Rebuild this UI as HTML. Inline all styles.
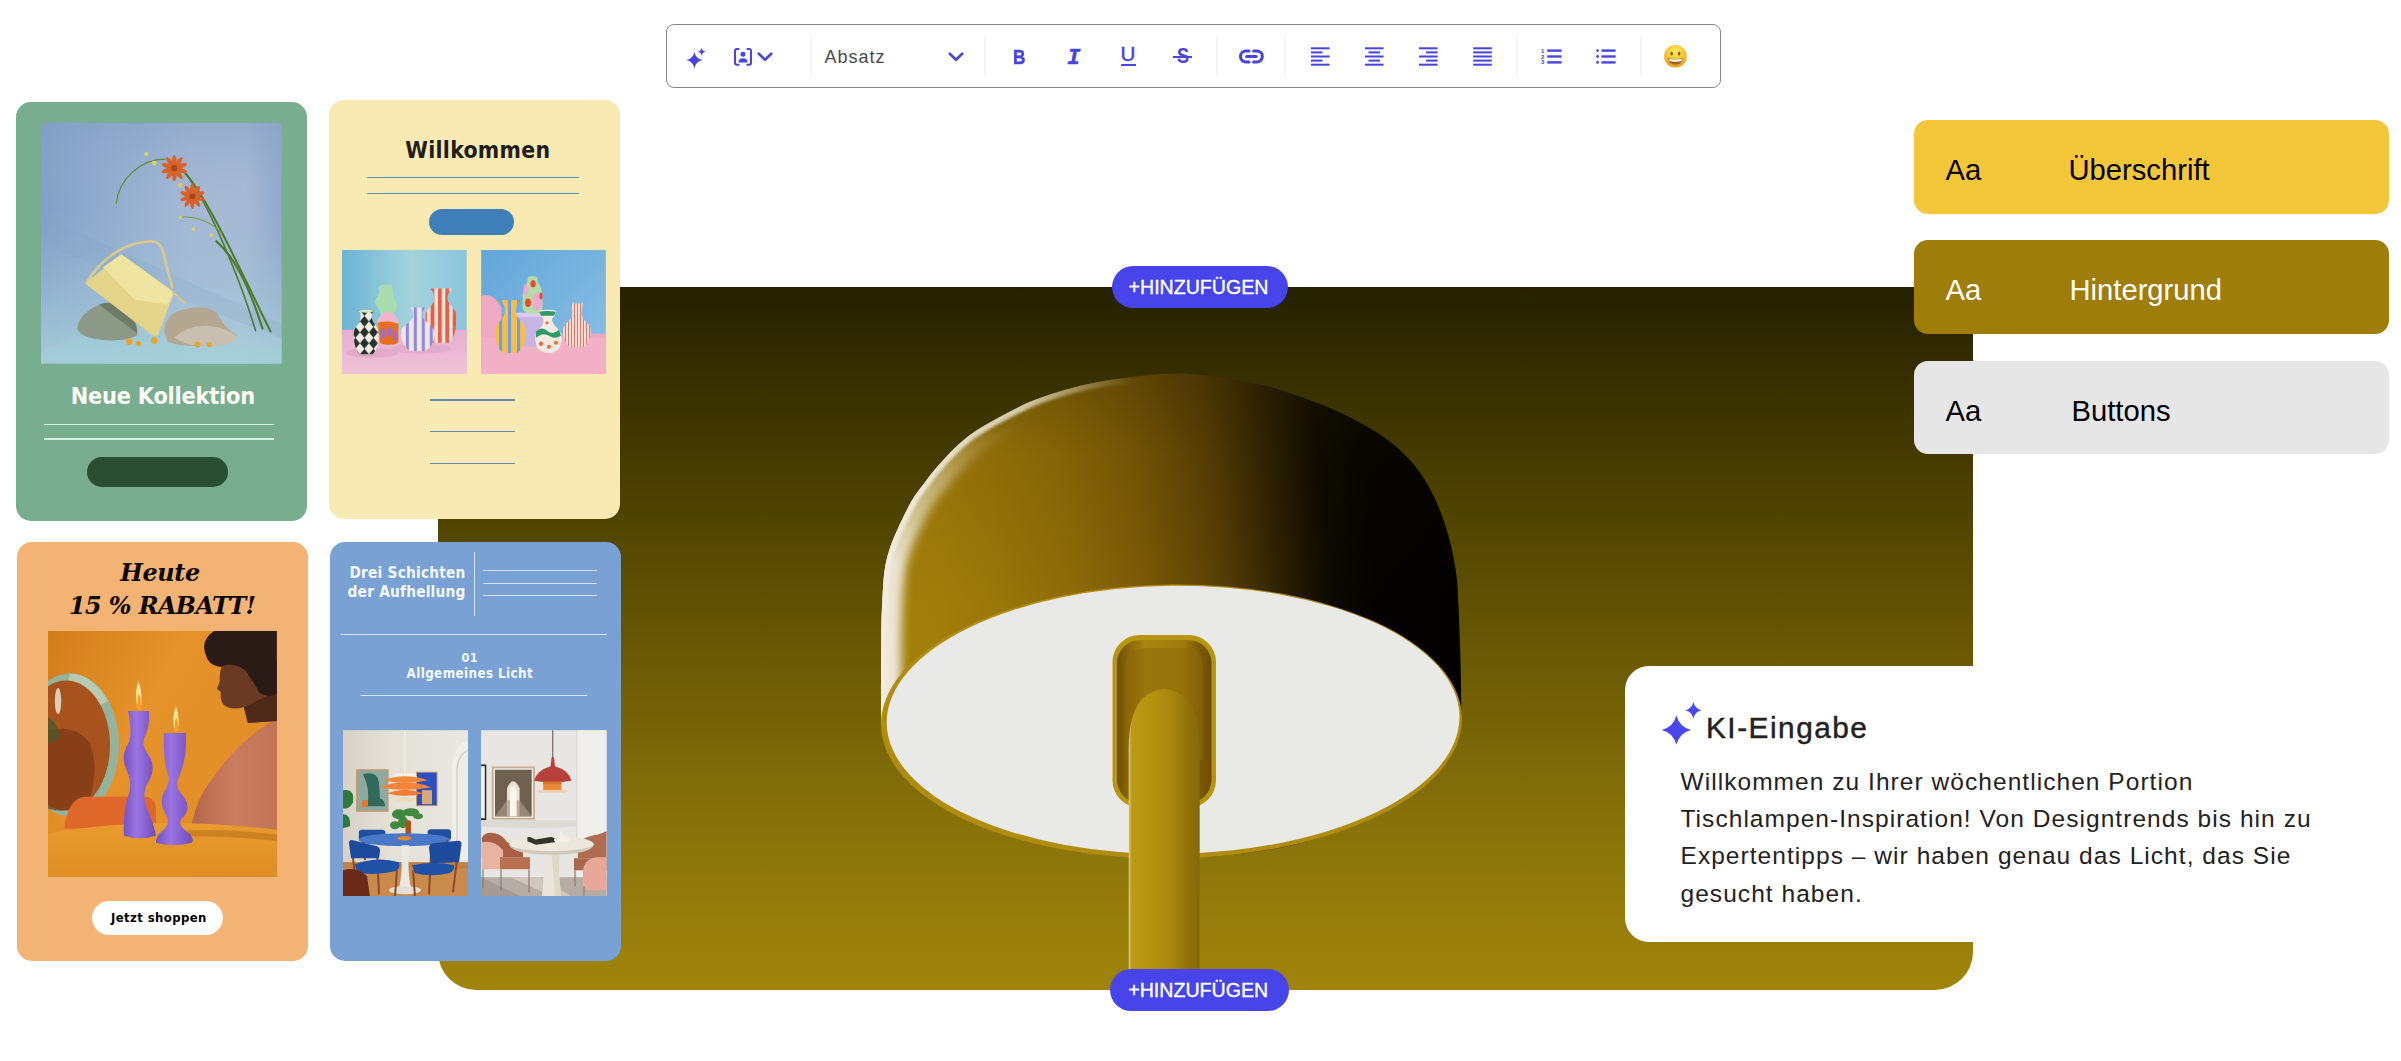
<!DOCTYPE html>
<html lang="de">
<head>
<meta charset="utf-8">
<title>E-Mail Editor</title>
<style>
*{box-sizing:border-box;margin:0;padding:0}
html,body{width:2401px;height:1061px;background:#fff;overflow:hidden}
body{position:relative;font-family:"Liberation Sans",sans-serif}
.abs{position:absolute}
/* main panel */
#panel{left:437.5px;top:287px;width:1535.5px;height:703px;border-radius:0 0 38px 38px;overflow:hidden;
 background:linear-gradient(180deg,#262100 0%,#463c00 25%,#675604 50%,#86710a 75%,#a1840a 100%)}
#panel svg{position:absolute;left:0;top:0}
/* toolbar */
#toolbar{left:666px;top:24px;width:1054.5px;height:63.5px;border:1.3px solid #858585;border-radius:8px;background:#fff}
.tdiv{position:absolute;top:36px;width:1.3px;height:40px;background:#ededf0}
#absatz{left:824.5px;top:46.3px;font-size:18px;line-height:22px;color:#4a4a4a;letter-spacing:1px}
.tb{color:#4744e0;line-height:24px;font-family:"Liberation Sans",sans-serif}
/* pills */
.pill{background:#4745ea;border-radius:22px;color:#fff;font-size:19.6px;line-height:43px;text-align:center;letter-spacing:0;padding-right:3px;-webkit-text-stroke:.35px #fff}
/* cards */
.card{border-radius:15px;overflow:hidden}
#c1{left:16px;top:101.7px;width:290.6px;height:419.2px;background:#78ad8f}
#c2{left:329px;top:99.8px;width:290.8px;height:419.2px;background:#f8eab2}
#c3{left:17.3px;top:541.7px;width:290.8px;height:419.2px;background:#f2b374}
#c4{left:330.4px;top:541.5px;width:290.6px;height:419.5px;background:#79a1d4}
.dv{font-family:"DejaVu Sans","Liberation Sans",sans-serif;font-weight:bold}
.dvc{font-family:"DejaVu Sans Condensed","DejaVu Sans","Liberation Sans",sans-serif;font-weight:bold;font-stretch:condensed}
.ln{position:absolute;height:1.3px}
/* swatches */
.sw{left:1913.5px;width:475px;height:93.5px;border-radius:14px;font-size:29.2px;line-height:34px}
.sw span{position:absolute;top:33px}
/* KI card */
#ki{left:1625px;top:666px;width:760px;height:275.5px;background:#fff;border-radius:24px}
#kit{left:1706px;top:706.1px;font-size:29.8px;line-height:44px;color:#222;letter-spacing:1.5px;-webkit-text-stroke:.45px #222}
#kib{left:1680.5px;top:763px;font-size:24.5px;line-height:37.2px;color:#222;white-space:nowrap;letter-spacing:1.05px}
</style>
</head>
<body>

<!-- MAIN PANEL -->
<div id="panel" class="abs">
<!--LAMP-->
<svg width="1535.5" height="703" viewBox="437.5 287 1535.5 703">
<defs>
<linearGradient id="dg" gradientUnits="userSpaceOnUse" x1="879" y1="600" x2="1461" y2="545">
<stop offset="0" stop-color="#a27f0b"/><stop offset=".1" stop-color="#a17d0a"/><stop offset=".21" stop-color="#997609"/><stop offset=".34" stop-color="#8c6a08"/><stop offset=".46" stop-color="#795906"/><stop offset=".58" stop-color="#594005"/><stop offset=".675" stop-color="#322403"/><stop offset=".77" stop-color="#0c0900"/><stop offset=".85" stop-color="#040300"/><stop offset="1" stop-color="#020100"/>
</linearGradient>
<linearGradient id="eg" gradientUnits="userSpaceOnUse" x1="0" y1="700" x2="0" y2="425">
<stop offset="0" stop-color="#f1ece1" stop-opacity=".97"/><stop offset=".5" stop-color="#f1ece1" stop-opacity=".92"/><stop offset=".8" stop-color="#efe8d8" stop-opacity=".45"/><stop offset="1" stop-color="#efe8d8" stop-opacity="0"/>
</linearGradient>
<linearGradient id="eg2" gradientUnits="userSpaceOnUse" x1="900" y1="520" x2="1130" y2="376">
<stop offset="0" stop-color="#f1ece1" stop-opacity=".95"/><stop offset=".6" stop-color="#f1ece1" stop-opacity=".75"/><stop offset="1" stop-color="#efe8d8" stop-opacity="0"/>
</linearGradient>
<filter id="bl2" x="-10%" y="-10%" width="120%" height="120%"><feGaussianBlur stdDeviation="1.5"/></filter>
<clipPath id="dc"><path d="M880.5 722.0 C880.5 711.7 880.4 679.5 880.6 660.0 C880.8 640.5 880.5 622.3 881.6 605.0 C882.7 587.7 882.6 572.3 887.0 556.0 C891.4 539.7 901.6 519.2 907.8 507.0 C914.0 494.8 918.1 490.7 924.2 482.5 C930.3 474.3 936.6 466.2 944.5 458.0 C952.4 449.8 959.9 441.7 971.5 433.5 C983.1 425.3 1002.5 415.1 1014.4 409.0 C1026.2 402.9 1030.8 400.9 1042.6 396.8 C1054.4 392.7 1070.9 387.8 1085.4 384.5 C1099.9 381.2 1113.7 379.0 1129.5 377.2 C1145.3 375.4 1162.7 373.1 1180.0 373.5 C1197.3 373.9 1217.2 377.0 1233.5 379.6 C1249.8 382.2 1261.3 384.5 1277.6 389.4 C1293.9 394.3 1314.8 401.6 1331.5 409.0 C1348.2 416.4 1365.3 425.3 1378.0 433.5 C1390.7 441.7 1399.5 449.8 1407.5 458.0 C1415.5 466.2 1420.8 474.3 1425.9 482.5 C1431.0 490.7 1434.6 498.8 1438.1 507.0 C1441.6 515.2 1444.2 523.3 1446.7 531.5 C1449.2 539.7 1451.2 547.8 1452.8 556.0 C1454.4 564.2 1455.7 572.3 1456.5 580.5 C1457.3 588.7 1457.3 591.8 1457.9 605.0 C1458.5 618.2 1459.5 641.5 1460.0 660.0 C1460.5 678.5 1460.8 706.7 1461.0 716.0 C1440 800 1330 858 1171 858 C1010 858 900 800 880.5 722 Z"/></clipPath>
<filter id="bl" x="-10%" y="-10%" width="120%" height="120%"><feGaussianBlur stdDeviation="5"/></filter>
<linearGradient id="dt" gradientUnits="userSpaceOnUse" x1="0" y1="374" x2="0" y2="600">
<stop offset="0" stop-color="#2a2000" stop-opacity=".3"/><stop offset=".35" stop-color="#2a2000" stop-opacity=".1"/><stop offset="1" stop-color="#2a2000" stop-opacity="0"/>
</linearGradient>
<linearGradient id="sg" gradientUnits="userSpaceOnUse" x1="1127.5" y1="0" x2="1199.5" y2="0">
<stop offset="0" stop-color="#e6d9a2"/><stop offset=".05" stop-color="#bd9a14"/><stop offset=".3" stop-color="#b6930f"/><stop offset=".6" stop-color="#a8860e"/><stop offset=".85" stop-color="#8f700b"/><stop offset="1" stop-color="#86680a"/>
</linearGradient>
<linearGradient id="sl" gradientUnits="userSpaceOnUse" x1="1116" y1="0" x2="1211" y2="0">
<stop offset="0" stop-color="#6e4c06"/><stop offset=".12" stop-color="#8a6608"/><stop offset=".3" stop-color="#a9850f"/><stop offset=".7" stop-color="#a07c0e"/><stop offset=".88" stop-color="#7a5807"/><stop offset="1" stop-color="#6e4c06"/>
</linearGradient>
</defs>
<!-- dome -->
<path id="dome" d="M880.5 722.0 C880.5 711.7 880.4 679.5 880.6 660.0 C880.8 640.5 880.5 622.3 881.6 605.0 C882.7 587.7 882.6 572.3 887.0 556.0 C891.4 539.7 901.6 519.2 907.8 507.0 C914.0 494.8 918.1 490.7 924.2 482.5 C930.3 474.3 936.6 466.2 944.5 458.0 C952.4 449.8 959.9 441.7 971.5 433.5 C983.1 425.3 1002.5 415.1 1014.4 409.0 C1026.2 402.9 1030.8 400.9 1042.6 396.8 C1054.4 392.7 1070.9 387.8 1085.4 384.5 C1099.9 381.2 1113.7 379.0 1129.5 377.2 C1145.3 375.4 1162.7 373.1 1180.0 373.5 C1197.3 373.9 1217.2 377.0 1233.5 379.6 C1249.8 382.2 1261.3 384.5 1277.6 389.4 C1293.9 394.3 1314.8 401.6 1331.5 409.0 C1348.2 416.4 1365.3 425.3 1378.0 433.5 C1390.7 441.7 1399.5 449.8 1407.5 458.0 C1415.5 466.2 1420.8 474.3 1425.9 482.5 C1431.0 490.7 1434.6 498.8 1438.1 507.0 C1441.6 515.2 1444.2 523.3 1446.7 531.5 C1449.2 539.7 1451.2 547.8 1452.8 556.0 C1454.4 564.2 1455.7 572.3 1456.5 580.5 C1457.3 588.7 1457.3 591.8 1457.9 605.0 C1458.5 618.2 1459.5 641.5 1460.0 660.0 C1460.5 678.5 1460.8 706.7 1461.0 716.0 C1440 800 1330 858 1171 858 C1010 858 900 800 880.5 722 Z" fill="url(#dg)"/>
<path d="M880.5 722.0 C880.5 711.7 880.4 679.5 880.6 660.0 C880.8 640.5 880.5 622.3 881.6 605.0 C882.7 587.7 882.6 572.3 887.0 556.0 C891.4 539.7 901.6 519.2 907.8 507.0 C914.0 494.8 918.1 490.7 924.2 482.5 C930.3 474.3 936.6 466.2 944.5 458.0 C952.4 449.8 959.9 441.7 971.5 433.5 C983.1 425.3 1002.5 415.1 1014.4 409.0 C1026.2 402.9 1030.8 400.9 1042.6 396.8 C1054.4 392.7 1070.9 387.8 1085.4 384.5 C1099.9 381.2 1113.7 379.0 1129.5 377.2 C1145.3 375.4 1162.7 373.1 1180.0 373.5 C1197.3 373.9 1217.2 377.0 1233.5 379.6 C1249.8 382.2 1261.3 384.5 1277.6 389.4 C1293.9 394.3 1314.8 401.6 1331.5 409.0 C1348.2 416.4 1365.3 425.3 1378.0 433.5 C1390.7 441.7 1399.5 449.8 1407.5 458.0 C1415.5 466.2 1420.8 474.3 1425.9 482.5 C1431.0 490.7 1434.6 498.8 1438.1 507.0 C1441.6 515.2 1444.2 523.3 1446.7 531.5 C1449.2 539.7 1451.2 547.8 1452.8 556.0 C1454.4 564.2 1455.7 572.3 1456.5 580.5 C1457.3 588.7 1457.3 591.8 1457.9 605.0 C1458.5 618.2 1459.5 641.5 1460.0 660.0 C1460.5 678.5 1460.8 706.7 1461.0 716.0 C1440 800 1330 858 1171 858 C1010 858 900 800 880.5 722 Z" fill="url(#dt)"/>
<g clip-path="url(#dc)"><path d="M880.5 780 L880.5 722.0 C880.5 711.7 880.4 679.5 880.6 660.0 C880.8 640.5 880.5 622.3 881.6 605.0 C882.7 587.7 882.6 572.3 887.0 556.0 C891.4 539.7 901.6 519.2 907.8 507.0 C914.0 494.8 918.1 490.7 924.2 482.5 C930.3 474.3 936.6 466.2 944.5 458.0 C952.4 449.8 959.9 441.7 971.5 433.5 C983.1 425.3 1002.5 415.1 1014.4 409.0 C1026.2 402.9 1030.8 400.9 1042.6 396.8 C1054.4 392.7 1070.9 387.8 1085.4 384.5 C1099.9 381.2 1113.7 379.0 1129.5 377.2 C1145.3 375.4 1162.7 373.1 1180.0 373.5" fill="none" stroke="url(#eg)" stroke-width="40" filter="url(#bl)"/><path d="M880.5 780 L880.5 722.0 C880.5 711.7 880.4 679.5 880.6 660.0 C880.8 640.5 880.5 622.3 881.6 605.0 C882.7 587.7 882.6 572.3 887.0 556.0 C891.4 539.7 901.6 519.2 907.8 507.0 C914.0 494.8 918.1 490.7 924.2 482.5 C930.3 474.3 936.6 466.2 944.5 458.0 C952.4 449.8 959.9 441.7 971.5 433.5 C983.1 425.3 1002.5 415.1 1014.4 409.0 C1026.2 402.9 1030.8 400.9 1042.6 396.8 C1054.4 392.7 1070.9 387.8 1085.4 384.5 C1099.9 381.2 1113.7 379.0 1129.5 377.2 C1145.3 375.4 1162.7 373.1 1180.0 373.5" fill="none" stroke="url(#eg2)" stroke-width="11" filter="url(#bl2)"/></g>
<!-- rim + white -->
<ellipse cx="1171" cy="721.5" rx="290.5" ry="137" fill="#b08c0f" transform="rotate(-.7 1171 721)"/>
<ellipse cx="1172.6" cy="719.8" rx="286.4" ry="134" fill="#e9e9e7" transform="rotate(-.7 1171 721)"/>
<!-- slot -->
<rect x="1112" y="635" width="103.5" height="172.5" rx="27" fill="#b8950f"/>
<rect x="1116.5" y="640" width="94.5" height="163" rx="23" fill="url(#sl)"/>
<path d="M1124 760 V668 Q1124 648 1146 648 H1182 Q1203 648 1203 668 V760Z" fill="#8d6a0a" opacity=".55"/>
<!-- stem -->
<path d="M1128.2 1000 V748 Q1128.2 692 1163.5 689 Q1199.2 692 1199.2 748 V1000 Z" fill="url(#sg)"/>
</svg>
<!--/LAMP-->
</div>

<!-- TOOLBAR -->
<div id="toolbar" class="abs"></div>
<!--TOOLBARICONS-->
<svg class="abs" style="left:666px;top:24px" width="1056" height="64" viewBox="666 24 1056 64" fill="#4744e0">
<rect x="810.3" y="36" width="1.4" height="40" fill="#f0f0f4"/>
<rect x="984.3" y="36" width="1.4" height="40" fill="#f0f0f4"/>
<rect x="1216.3" y="36" width="1.4" height="40" fill="#f0f0f4"/>
<rect x="1284.3" y="36" width="1.4" height="40" fill="#f0f0f4"/>
<rect x="1516.3" y="36" width="1.4" height="40" fill="#f0f0f4"/>
<rect x="1640.3" y="36" width="1.4" height="40" fill="#f0f0f4"/>
<path d="M694.4 51.7 Q695.66 58.84 702.8 60.1 Q695.66 61.36 694.4 68.5 Q693.14 61.36 686.0 60.1 Q693.14 58.84 694.4 51.7Z"/><path d="M701.7 47.8 Q702.26 51.24 705.7 51.8 Q702.26 52.36 701.7 55.8 Q701.14 52.36 697.7 51.8 Q701.14 51.24 701.7 47.8Z"/>
<g fill="none" stroke="#4744e0" stroke-width="2" stroke-linejoin="round" stroke-linecap="round"><path d="M738.6 49 H737 Q735 49 735 51 V62.7 Q735 64.7 737 64.7 H738.6"/><path d="M747.4 49 H749 Q751 49 751 51 V62.7 Q751 64.7 749 64.7 H747.4"/></g>
<circle cx="743" cy="54.2" r="2.5"/><path d="M738.4 62.6 Q738.4 58.2 743 58.2 Q747.6 58.2 747.6 62.6 Z"/>
<path d="M758.8 53.7 L765 59.7 L771.2 53.7" fill="none" stroke="#4744e0" stroke-width="2.6" stroke-linecap="round" stroke-linejoin="round"/>
<path d="M949.8 53.7 L956 59.7 L962.2 53.7" fill="none" stroke="#4744e0" stroke-width="2.6" stroke-linecap="round" stroke-linejoin="round"/>
<g fill="none" stroke="#4744e0" stroke-width="3" stroke-linecap="round"><path d="M1249 50.9 H1246 A5.5 5.5 0 0 0 1246 62 H1249"/><path d="M1253.6 50.9 H1256.8 A5.5 5.5 0 0 1 1256.8 62 H1253.6"/><path d="M1246.6 56.45 H1256.2"/></g>
<rect x="1311.0" y="47.3" width="18.6" height="2"/><rect x="1311.0" y="51.4" width="11.5" height="2"/><rect x="1311.0" y="55.5" width="18.6" height="2"/><rect x="1311.0" y="59.6" width="11.5" height="2"/><rect x="1311.0" y="63.7" width="18.6" height="2"/><rect x="1365.0" y="47.3" width="18.6" height="2"/><rect x="1368.5" y="51.4" width="11.5" height="2"/><rect x="1365.0" y="55.5" width="18.6" height="2"/><rect x="1368.5" y="59.6" width="11.5" height="2"/><rect x="1365.0" y="63.7" width="18.6" height="2"/><rect x="1419.0" y="47.3" width="18.6" height="2"/><rect x="1426.1" y="51.4" width="11.5" height="2"/><rect x="1419.0" y="55.5" width="18.6" height="2"/><rect x="1426.1" y="59.6" width="11.5" height="2"/><rect x="1419.0" y="63.7" width="18.6" height="2"/><rect x="1473.2" y="47.3" width="18.6" height="2"/><rect x="1473.2" y="51.4" width="18.6" height="2"/><rect x="1473.2" y="55.5" width="18.6" height="2"/><rect x="1473.2" y="59.6" width="18.6" height="2"/><rect x="1473.2" y="63.7" width="18.6" height="2"/>
<rect x="1547.2" y="49.4" width="14.4" height="2.4"/>
<circle cx="1597.6" cy="50.6" r="1.4"/><rect x="1601.4" y="49.4" width="14.2" height="2.4"/>
<rect x="1547.2" y="55.3" width="14.4" height="2.4"/>
<circle cx="1597.6" cy="56.5" r="1.4"/><rect x="1601.4" y="55.3" width="14.2" height="2.4"/>
<rect x="1547.2" y="61.2" width="14.4" height="2.4"/>
<circle cx="1597.6" cy="62.4" r="1.4"/><rect x="1601.4" y="61.2" width="14.2" height="2.4"/>
<text x="1541" y="52.6" font-family="Liberation Sans,sans-serif" font-weight="bold" font-size="6" fill="#4744e0">1</text>
<text x="1541" y="58.5" font-family="Liberation Sans,sans-serif" font-weight="bold" font-size="6" fill="#4744e0">2</text>
<text x="1541" y="64.4" font-family="Liberation Sans,sans-serif" font-weight="bold" font-size="6" fill="#4744e0">3</text>
<defs><radialGradient id="em" cx=".5" cy=".28" r=".75"><stop offset="0" stop-color="#fdea62"/><stop offset=".5" stop-color="#f8c832"/><stop offset="1" stop-color="#e6991e"/></radialGradient></defs>
<circle cx="1675.4" cy="56.3" r="11.3" fill="url(#em)"/>
<ellipse cx="1671.7" cy="53.6" rx="1.25" ry="1.9" fill="#7a5a12"/><ellipse cx="1679.1" cy="53.6" rx="1.25" ry="1.9" fill="#7a5a12"/>
<path d="M1667.9 58 Q1675.4 59.8 1682.9 58 Q1682.2 64.8 1675.4 64.8 Q1668.6 64.8 1667.9 58Z" fill="#a0641a"/>
<path d="M1668.7 58.8 Q1675.4 60.3 1682.1 58.8 Q1681.9 60.4 1681.2 61.3 Q1675.4 62.2 1669.6 61.3 Q1668.9 60.4 1668.7 58.8Z" fill="#fff"/>
</svg>
<div class="abs tb" style="left:1013.2px;top:44.9px;font-weight:bold;font-size:21px;transform:scaleX(.82);transform-origin:0 0;-webkit-text-stroke:.5px #4744e0">B</div>
<div class="abs tb" style="left:1067.3px;top:46.5px;font-family:'Liberation Mono',monospace;font-weight:bold;font-style:italic;font-size:21.8px;-webkit-text-stroke:.6px #4744e0">I</div>
<div class="abs tb" style="left:1120.6px;top:41.6px;font-size:20.6px;-webkit-text-stroke:.5px #4744e0">U</div>
<div class="abs" style="left:1121px;top:64.3px;width:14.6px;height:1.7px;background:#4744e0"></div>
<div class="abs tb" style="left:1176.8px;top:44.4px;font-size:21.4px;font-weight:bold;transform:scaleX(.86);transform-origin:0 0">S</div>
<div class="abs" style="left:1173px;top:55.7px;width:18.8px;height:2.2px;background:#4744e0"></div>
<!--/TOOLBARICONS-->
<div id="absatz" class="abs">Absatz</div>

<!-- ADD BUTTONS -->
<div class="abs pill" style="left:1112px;top:266px;width:176px;height:42px">+HINZUFÜGEN</div>
<div class="abs pill" style="left:1110.2px;top:968.7px;width:179px;height:42px">+HINZUFÜGEN</div>

<!-- CARDS -->
<div id="c1" class="abs card">
<!--C1-->
<svg class="abs" style="left:25px;top:21.4px" width="240.6" height="240.6" viewBox="0 0 240 240">
<defs>
<linearGradient id="b1" x1="0" y1="0" x2="1" y2="0"><stop offset="0" stop-color="#7c9cc4"/><stop offset=".35" stop-color="#93aecf"/><stop offset=".62" stop-color="#a6b9d4"/><stop offset=".85" stop-color="#a9bad5"/><stop offset="1" stop-color="#8ea6c8"/></linearGradient>
<linearGradient id="b1v" x1="0" y1="0" x2="0" y2="1"><stop offset="0" stop-color="#86a0c6" stop-opacity=".55"/><stop offset=".35" stop-color="#9db5d3" stop-opacity=".15"/><stop offset=".7" stop-color="#a3c4d8" stop-opacity=".55"/><stop offset="1" stop-color="#a9cfd9" stop-opacity=".95"/></linearGradient>
</defs>
<rect width="240" height="240" fill="url(#b1)"/>
<rect width="240" height="240" fill="url(#b1v)"/>
<path d="M0 92 L240 200 V215 L0 120Z" fill="#7f9fc2" opacity=".18"/>
<path d="M0 228 Q40 205 120 215 T240 222 V240 H0Z" fill="#9fd0d6" opacity=".35"/>
<!-- stems -->
<g fill="none" stroke="#4f7a2c" stroke-linecap="round">
<path d="M141 47 C165 70 200 150 229 208" stroke-width="2"/>
<path d="M143 49 C168 80 200 160 214 207" stroke-width="1.6"/>
<path d="M175 118 C195 135 210 170 221 205" stroke-width="2.2"/>
<path d="M124 36 C100 36 78 55 75 80" stroke-width="1.1" stroke="#5f8a3a"/>
<path d="M139 94 C155 92 172 100 180 110" stroke-width="1" stroke="#7a9a4a"/>
</g>
<g fill="#e2d05a"><circle cx="105" cy="31" r="2"/><circle cx="113" cy="40" r="2.4"/><circle cx="139" cy="62" r="2.2"/><circle cx="152" cy="106" r="1.8"/><circle cx="170" cy="112" r="1.8"/><circle cx="139" cy="94" r="1.5"/></g>
<g fill="#d9622a"><ellipse cx="133" cy="38.1" rx="2.3" ry="6.3" transform="rotate(0 133 45)"/><ellipse cx="133" cy="38.1" rx="2.3" ry="6.3" transform="rotate(36 133 45)"/><ellipse cx="133" cy="38.1" rx="2.3" ry="6.3" transform="rotate(72 133 45)"/><ellipse cx="133" cy="38.1" rx="2.3" ry="6.3" transform="rotate(108 133 45)"/><ellipse cx="133" cy="38.1" rx="2.3" ry="6.3" transform="rotate(144 133 45)"/><ellipse cx="133" cy="38.1" rx="2.3" ry="6.3" transform="rotate(180 133 45)"/><ellipse cx="133" cy="38.1" rx="2.3" ry="6.3" transform="rotate(216 133 45)"/><ellipse cx="133" cy="38.1" rx="2.3" ry="6.3" transform="rotate(252 133 45)"/><ellipse cx="133" cy="38.1" rx="2.3" ry="6.3" transform="rotate(288 133 45)"/><ellipse cx="133" cy="38.1" rx="2.3" ry="6.3" transform="rotate(324 133 45)"/><ellipse cx="151" cy="66.4" rx="2.2" ry="6.1" transform="rotate(0 151 73)"/><ellipse cx="151" cy="66.4" rx="2.2" ry="6.1" transform="rotate(36 151 73)"/><ellipse cx="151" cy="66.4" rx="2.2" ry="6.1" transform="rotate(72 151 73)"/><ellipse cx="151" cy="66.4" rx="2.2" ry="6.1" transform="rotate(108 151 73)"/><ellipse cx="151" cy="66.4" rx="2.2" ry="6.1" transform="rotate(144 151 73)"/><ellipse cx="151" cy="66.4" rx="2.2" ry="6.1" transform="rotate(180 151 73)"/><ellipse cx="151" cy="66.4" rx="2.2" ry="6.1" transform="rotate(216 151 73)"/><ellipse cx="151" cy="66.4" rx="2.2" ry="6.1" transform="rotate(252 151 73)"/><ellipse cx="151" cy="66.4" rx="2.2" ry="6.1" transform="rotate(288 151 73)"/><ellipse cx="151" cy="66.4" rx="2.2" ry="6.1" transform="rotate(324 151 73)"/><circle cx="133" cy="45" r="5.5"/><circle cx="151" cy="73" r="5.2"/></g>
<g fill="#a8481a"><circle cx="133" cy="45" r="3.2"/><circle cx="151" cy="73" r="3"/></g>
<!-- rocks -->
<path d="M36 205 Q38 190 58 181 Q72 176 84 186 Q98 198 96 212 Q80 219 58 216 Q40 214 36 205Z" fill="#8c9986"/>
<path d="M58 181 Q72 176 84 186 Q96 197 96 210 Q84 200 72 192Z" fill="#5f6d5c" opacity=".7"/>
<path d="M123 207 Q124 190 142 186 Q165 180 176 190 Q182 204 196 212 Q192 222 170 222 Q140 224 126 218Z" fill="#b3a791"/>
<path d="M133 214 Q150 198 178 204 Q190 208 196 213 Q192 222 170 222 Q146 224 133 214Z" fill="#c8bfae"/>
<!-- bag -->
<path d="M45 160 Q70 120 110 118 Q118 118 121 126 L131 165" fill="none" stroke="#d9c98a" stroke-width="2.6"/>
<path d="M44 160 L80 131 L133 169 L117 211 Q114 214 110 211 Z" fill="#e3d489"/>
<path d="M62 144 L80 131 L133 169 L126 181 L93 176 Z" fill="#efe3a0"/>
<path d="M131 168 L144 180" stroke="#d8c690" stroke-width="2" fill="none"/>
<g fill="#e8a52a"><circle cx="88" cy="218" r="3.4"/><circle cx="97" cy="220" r="2.6"/><circle cx="113" cy="217" r="3.2"/><circle cx="156" cy="221" r="3"/><circle cx="168" cy="221" r="2.6"/></g>
</svg>
<div class="abs dvc" style="left:0;top:279.3px;width:293.6px;text-align:center;font-size:23.3px;line-height:30px;color:#fdfdf8;letter-spacing:-.22px">Neue Kollektion</div>
<div class="ln" style="left:28px;top:322.1px;width:230px;background:#d6efdf"></div>
<div class="ln" style="left:28px;top:336.7px;width:230px;background:#d6efdf"></div>
<div class="abs" style="left:71.3px;top:355.7px;width:140.4px;height:29.2px;border-radius:15px;background:#2a4e33"></div>
<!--/C1-->
</div>
<div id="c2" class="abs card">
<!--C2-->
<div class="abs dvc" style="left:0;top:35.4px;width:297.6px;text-align:center;font-size:22.8px;line-height:30px;color:#1f1d1a;letter-spacing:.3px">Willkommen</div>
<div class="ln" style="left:37.6px;top:76.9px;width:212.2px;background:#5e8fae"></div>
<div class="ln" style="left:37.6px;top:92.9px;width:212.2px;background:#5e8fae"></div>
<div class="abs" style="left:99.9px;top:109.3px;width:84.7px;height:25.6px;border-radius:13px;background:#3f7fb9"></div>
<svg class="abs" style="left:13.2px;top:150px" width="124.7" height="124.7" viewBox="0 0 125 125">
<defs><linearGradient id="v1" x1="0" y1="0" x2="1" y2="0"><stop offset="0" stop-color="#6db3d6"/><stop offset=".55" stop-color="#a3d3da"/><stop offset="1" stop-color="#8cc5dc"/></linearGradient>
<linearGradient id="v1f" x1="0" y1="0" x2="0" y2="1"><stop offset="0" stop-color="#e7aed0"/><stop offset="1" stop-color="#efc3d6"/></linearGradient>
<pattern id="chk" width="9" height="11" patternUnits="userSpaceOnUse" patternTransform="rotate(0)"><rect width="9" height="11" fill="#f1ece4"/><path d="M4.5 0 L9 5.5 L4.5 11 L0 5.5Z" fill="#25302a"/></pattern>
<pattern id="rs" width="7.4" height="10" patternUnits="userSpaceOnUse"><rect width="7.4" height="10" fill="#f0e2d8"/><rect width="3.8" height="10" fill="#e5604a"/></pattern>
<pattern id="ps" width="8" height="10" patternUnits="userSpaceOnUse"><rect width="8" height="10" fill="#f0e4e4"/><rect width="3" height="10" fill="#8e8ad8"/></pattern>
</defs>
<rect width="125" height="125" fill="url(#v1)"/>
<rect y="80" width="125" height="45" fill="url(#v1f)"/>
<ellipse cx="30" cy="103" rx="26" ry="5" fill="#d99ac0" opacity=".5"/><ellipse cx="80" cy="99" rx="30" ry="5" fill="#d99ac0" opacity=".4"/>
<!-- vase B -->
<path d="M37 38 Q37 34.5 44 34.5 Q51 34.5 51 38 Q50 44 54 50 Q58 58 51 64 L55 68 Q57 70 56.5 74 V92 Q56 95 46 95 Q38 95 38 92 L35.5 72 Q36 68 39 66 Q39 62 36 58 Q30 52 36 46 Q38 42 37 38Z" fill="#a6dcae"/>
<path d="M39 64 Q47 60 51 64 L55 68 Q57 70 56.5 74 L36 74 Q35.5 69 39 66Z" fill="#f2b6cc"/>
<path d="M35.8 73 Q46 70 56.5 74 V92 Q56 95 46 95 Q38 95 38 92Z" fill="#ea6f1a"/>
<g fill="#9a6cd8"><ellipse cx="41" cy="84" rx="2.2" ry="6"/><ellipse cx="47.5" cy="82" rx="2" ry="5"/><ellipse cx="53" cy="86" rx="1.8" ry="6"/></g>
<!-- vase D -->
<path d="M88.3 38.5 Q92.8 42.4 92.8 48.3 C92.8 56.6 83.8 57.6 83.8 66.8 C83.8 83.8 88.8 92.0 90.8 93.0 H107.8 C109.8 92.0 114.8 83.8 114.8 66.8 C114.8 57.6 105.8 56.6 105.8 48.3 Q105.8 42.4 110.3 38.5 Z" fill="url(#rs)"/>
<!-- vase C -->
<path d="M68.5 57.7 Q71.5 60.5 71.5 64.7 C71.5 73.3 59.0 74.3 59.0 83.9 C59.0 95.2 67.0 100.3 69.0 101.3 H83.0 C85.0 100.3 93.0 95.2 93.0 83.9 C93.0 74.3 80.5 73.3 80.5 64.7 Q80.5 60.5 83.5 57.7 Z" fill="url(#ps)"/>
<!-- vase A -->
<path d="M16.8 61.0 Q18.8 63.1 18.8 66.2 C18.8 74.6 11.8 75.6 11.8 84.9 C11.8 97.6 16.3 103.5 18.3 104.5 H30.3 C32.3 103.5 36.8 97.6 36.8 84.9 C36.8 75.6 29.8 74.6 29.8 66.2 Q29.8 63.1 31.8 61.0 Z" fill="url(#chk)"/>
<ellipse cx="24.3" cy="61.3" rx="7" ry="1.5" fill="#cfe7c0"/>
</svg>
<svg class="abs" style="left:151.9px;top:150px" width="125" height="124.7" viewBox="0 0 125 125">
<defs><linearGradient id="v2" x1="0" y1="0" x2="1" y2="1"><stop offset="0" stop-color="#62a6d8"/><stop offset="1" stop-color="#8dc0e6"/></linearGradient>
<pattern id="ys" width="9" height="10" patternUnits="userSpaceOnUse"><rect width="9" height="10" fill="#f5bd4c"/><rect width="3" height="10" fill="#6c9ee0"/></pattern>
<pattern id="ts" width="3" height="10" patternUnits="userSpaceOnUse"><rect width="3" height="10" fill="#f4e2de"/><rect width=".9" height="10" fill="#e0604a"/></pattern>
</defs>
<rect width="125" height="125" fill="url(#v2)"/>
<path d="M0 46 Q12 42 20.5 58 V90 H0Z" fill="#efa9c4"/>
<rect y="84" width="125" height="41" fill="#f0a9c1"/>
<path d="M0 88 H125 V125 H0Z" fill="#f3b4c8" opacity=".6"/>
<path d="M34.5 63 H66 V92 L60 97 H34.5Z" fill="#c8b4e4"/>
<path d="M34.5 63 H66 L62 67 H34.5Z" fill="#dccdf0"/>
<!-- F -->
<path d="M47 27 Q51.5 25.5 56 27 Q56 32 59.5 37 Q62 42 61.5 58 Q61 64 51.5 64 Q42 64 41.5 58 Q41 42 43.5 37 Q47 32 47 27Z" fill="#b5dba6"/>
<g fill="#f0a8d0"><ellipse cx="56" cy="52" rx="4.5" ry="9"/><ellipse cx="45" cy="40" rx="2.5" ry="6"/></g>
<g fill="#ea4a32"><ellipse cx="52" cy="34" rx="2.6" ry="3.6"/><ellipse cx="47" cy="53" rx="3" ry="4.4"/><ellipse cx="60" cy="46" rx="1.6" ry="3.4"/></g>
<!-- H -->
<path d="M90.0 53.2 Q91.5 57.6 91.5 64.2 C91.5 71.6 82.2 72.4 82.2 80.6 C82.2 91.5 87.5 96.4 89.5 97.4 H102.5 C104.5 96.4 109.8 91.5 109.8 80.6 C109.8 72.4 100.5 71.6 100.5 64.2 Q100.5 57.6 102.0 53.2 Z" fill="url(#ts)"/>
<!-- E -->
<path d="M19.3 50.0 Q23.8 54.3 23.8 60.6 C23.8 70.7 13.6 71.8 13.6 83.0 C13.6 96.1 20.3 102.2 22.3 103.2 H36.3 C38.3 102.2 45.0 96.1 45.0 83.0 C45.0 71.8 34.8 70.7 34.8 60.6 Q34.8 54.3 39.3 50.0 Z" fill="url(#ys)"/>
<!-- G -->
<path d="M57.5 61 Q66 59 75.5 61 Q74 67 71 69 Q71 74 76 78 Q82 84 80.5 92 Q79 103 67.5 103.5 Q56 103 54.5 92 Q53 84 59 78 Q63 74 62.5 69 Q59 67 57.5 61Z" fill="#f3ebe2"/>
<path d="M55 82 Q60 76 66 81 T78 80 L80 86 Q74 90 68 86 T55 88Z" fill="#2e9a66"/>
<path d="M58 62 Q66 60.5 75 62 L73 66 H60Z" fill="#2e9a66"/>
<g fill="#ea6a3a"><circle cx="60" cy="94" r="2.2"/><circle cx="68" cy="97" r="2"/><circle cx="75" cy="93" r="2"/><circle cx="66" cy="73" r="1.6"/></g>
</svg>
<div class="ln" style="left:101px;top:299.5px;width:85.3px;background:#5e8fae"></div>
<div class="ln" style="left:101px;top:331.2px;width:85.3px;background:#5e8fae"></div>
<div class="ln" style="left:101px;top:362.8px;width:85.3px;background:#5e8fae"></div>
<!--/C2-->
</div>
<div id="c3" class="abs card">
<!--C3-->
<div class="abs" style="left:0;top:15.8px;width:285.4px;text-align:center;font-family:'DejaVu Serif','Liberation Serif',serif;font-weight:bold;font-style:italic;font-size:23.9px;line-height:32.6px;color:#0c0805;letter-spacing:-.35px">Heute</div>
<div class="abs" style="left:0;top:48.2px;width:290px;text-align:center;font-family:'DejaVu Serif','Liberation Serif',serif;font-weight:bold;font-style:italic;font-size:23.9px;line-height:32.6px;color:#0c0805;letter-spacing:-.6px;white-space:nowrap">15 % RABATT!</div>
<svg class="abs" style="left:30.9px;top:89.3px" width="228.9" height="245.8" viewBox="0 0 229 246">
<defs>
<linearGradient id="o1" x1="0" y1="0" x2="1" y2=".6"><stop offset="0" stop-color="#d27d1a"/><stop offset=".45" stop-color="#e6922a"/><stop offset="1" stop-color="#e18d27"/></linearGradient>
<linearGradient id="cn" x1="0" y1="0" x2="1" y2="0"><stop offset="0" stop-color="#7552c2"/><stop offset=".4" stop-color="#9a74e2"/><stop offset="1" stop-color="#6f4cba"/></linearGradient>
<linearGradient id="sw" x1="0" y1="0" x2="1" y2="0"><stop offset="0" stop-color="#b4664a"/><stop offset=".5" stop-color="#c97c5e"/><stop offset="1" stop-color="#c27456"/></linearGradient>
<linearGradient id="tb" x1="0" y1="0" x2="0" y2="1"><stop offset="0" stop-color="#e99b2d"/><stop offset="1" stop-color="#de8e24"/></linearGradient>
</defs>
<rect width="229" height="246" fill="url(#o1)"/>
<!-- mirror -->
<ellipse cx="22" cy="114" rx="49" ry="71.5" fill="#93b39c"/>
<path d="M22 42.5 A49 71.5 0 0 1 60 70 L52 74 A41 64 0 0 0 20 50Z" fill="#c3d0b8" opacity=".8"/>
<ellipse cx="18" cy="114.5" rx="44" ry="65" fill="#a8521d"/>
<path d="M0 100 Q26 92 42 112 Q52 140 40 172 Q20 184 0 178Z" fill="#7c3a15" opacity=".75"/>
<ellipse cx="10" cy="70" rx="3.2" ry="13" fill="#e9e2d2" opacity=".85"/>
<path d="M0 86 Q10 92 12 108 L0 112Z" fill="#4a5a2a" opacity=".8"/>
<!-- chair -->
<path d="M16 198 Q20 168 36 166 H96 Q108 166 108 180 V198Z" fill="#e0672a"/>
<!-- person -->
<path d="M143 246 L144 192 Q150 165 163 150 Q190 110 222 92 L229 89 V246Z" fill="url(#sw)"/>
<path d="M174 34 Q171 44 172 50 L169 58 L173 61 Q172 70 176 74 Q184 80 196 76 L200 92 L229 90 V30Z" fill="#6b3a22"/>
<path d="M196 76 L200 92 L229 90 V60 Q210 70 196 76Z" fill="#4f2a18"/>
<path d="M229 0 H166 Q152 10 158 24 Q160 34 172 36 Q186 30 198 40 Q206 52 212 62 Q222 68 229 62Z" fill="#2b1b17"/>
<!-- table -->
<path d="M0 203 Q50 193 120 192 Q180 193 229 199 V246 H0Z" fill="url(#tb)"/>
<path d="M120 201 Q170 196 229 204 V210 Q170 204 125 206Z" fill="#b56f18" opacity=".55"/>
<!-- candle 1 -->
<path d="M80 80 H101 Q102 94 98 103 Q92 113 100 123 Q109 136 101 150 Q93 162 99 178 Q107 196 108 205 Q92 210 76 205 Q75 182 80 166 Q85 152 79 140 Q72 126 80 113 Q85 103 80 80Z" fill="url(#cn)"/>
<!-- candle 2 -->
<path d="M116 102 H138 Q139 130 131 146 Q126 155 135 165 Q144 177 135 187 Q128 193 139 201 Q147 207 144 212 Q126 217 108 212 Q108 204 117 198 Q123 192 117 182 Q110 170 118 158 Q123 150 119 140 Q115 126 116 102Z" fill="url(#cn)"/>
<path d="M90.5 79 Q85.5 64 90.5 50 Q95.500 64 92.5 79Z" fill="#ffe79a"/><path d="M127.500 101 Q123 88 128 75 Q132.500 88 129.500 101Z" fill="#ffe79a"/>
<path d="M90.500 79 Q88.500 70 91 62 Q94 70 92.500 79Z" fill="#f59a22"/><path d="M127.500 101 Q126 93 128.200 86 Q131 93 129.500 101Z" fill="#f59a22"/>
</svg>
<div class="abs dv" style="left:74.3px;top:359.3px;width:131.3px;height:34.3px;border-radius:18px;background:#fff;color:#000;font-size:11.7px;line-height:35.4px;text-align:center;letter-spacing:.4px;padding-left:3.4px">Jetzt shoppen</div>
<!--/C3-->
</div>
<div id="c4" class="abs card">
<!--C4-->
<div class="abs dvc" style="left:0;top:22.2px;width:135.2px;text-align:right;font-size:15.3px;line-height:18.9px;color:#f4f8ff;letter-spacing:.2px;white-space:nowrap">Drei Schichten<br>der Aufhellung</div>
<div class="abs" style="left:143.5px;top:10px;width:1.3px;height:64.5px;background:#d5e6fb"></div>
<div class="ln" style="left:153px;top:28.2px;width:114px;background:#cfe2fa"></div>
<div class="ln" style="left:153px;top:41.1px;width:114px;background:#cfe2fa"></div>
<div class="ln" style="left:153px;top:53.7px;width:114px;background:#cfe2fa"></div>
<div class="ln" style="left:10.9px;top:92.3px;width:265.7px;background:#d5e6fb"></div>
<div class="abs dvc" style="left:0;top:108px;width:278.8px;text-align:center;font-size:12.6px;line-height:16px;color:#f4f8ff;letter-spacing:.3px">01</div>
<div class="abs dvc" style="left:0;top:124.6px;width:278.8px;text-align:center;font-size:13.3px;line-height:16px;color:#f4f8ff;letter-spacing:.4px;white-space:nowrap">Allgemeines Licht</div>
<div class="ln" style="left:30.6px;top:153.6px;width:226.2px;background:#d5e6fb"></div>
<svg class="abs" style="left:12.6px;top:188.1px" width="125" height="166.4" viewBox="0 0 125 166">
<defs><linearGradient id="w3" x1="0" y1="0" x2="1" y2="0"><stop offset="0" stop-color="#d6d2c6"/><stop offset=".4" stop-color="#e5e1d8"/><stop offset="1" stop-color="#e9e7e1"/></linearGradient></defs>
<rect width="125" height="166" fill="url(#w3)"/>
<path d="M109 166 V35 Q111 14 125 10 V166Z" fill="#f0eee8"/><path d="M114 150 V40 Q115 24 125 20" fill="none" stroke="#cfcabd" stroke-width="1.2"/>
<rect y="132" width="125" height="34" fill="#c98a4c"/><path d="M0 132 H125 V138 H0Z" fill="#b8763a" opacity=".5"/>
<rect x="13" y="39" width="32.6" height="42.6" fill="#c9976c"/><rect x="14.4" y="40.4" width="29.8" height="39.8" fill="#8fa9a0"/>
<path d="M20 44 Q34 40 36 52 L37 68 Q42 70 42 76 H24 Q28 60 20 44Z" fill="#2f6a5c"/><rect x="19" y="70" width="6" height="7" fill="#e8742a"/>
<rect x="73" y="41.5" width="21.6" height="34.4" fill="#c9976c"/><rect x="74" y="42.5" width="19.6" height="32.4" fill="#2c50c2"/><rect x="79" y="60" width="10" height="14" fill="#d9a87a"/>
<path d="M62 0 V43" stroke="#f4f2ee" stroke-width="1"/>
<path d="M52 43 H72 L74 47 H50Z" fill="#f5f0e8"/>
<path d="M40 50 Q62 42 85 50 Q62 55 40 50Z" fill="#f08a3a"/><path d="M36 57 Q62 47 88 57 Q62 62 36 57Z" fill="#f5843a"/><path d="M44 63 Q62 56 80 63 Q62 68 44 63Z" fill="#f47a30"/><path d="M52 68 H72 L70 71 H54Z" fill="#f6d9b0"/>
<g fill="#3f8a3c"><ellipse cx="56" cy="84" rx="7" ry="5"/><ellipse cx="68" cy="82" rx="8" ry="4"/><ellipse cx="52" cy="95" rx="5" ry="4"/><ellipse cx="60" cy="92" rx="5" ry="6"/><ellipse cx="75" cy="86" rx="5" ry="3"/></g>
<rect x="62.5" y="90" width="5.5" height="17" rx="2" fill="#a8521c"/>
<path d="M0 60 Q12 58 10 72 Q6 80 0 78Z" fill="#2f7a3a"/><path d="M0 84 Q8 84 7 96 L0 98Z" fill="#2f7a3a"/>
<!-- back chairs -->
<rect x="15.8" y="99.5" width="26.6" height="11" rx="3" fill="#1f4fa0"/><rect x="84.6" y="99" width="23.4" height="11" rx="3" fill="#1f4fa0"/>
<!-- table -->
<ellipse cx="61.5" cy="109.5" rx="46" ry="6.5" fill="#4a78c8"/>
<ellipse cx="61.5" cy="108" rx="7" ry="2.2" fill="#e8862a"/>
<path d="M58.5 115 H66 Q64 140 68 158 H56 Q60 140 58.5 115Z" fill="#ebe8e2"/><ellipse cx="62" cy="160" rx="16" ry="4" fill="#e4e0d8"/>
<!-- legs -->
<g stroke="#8a4a26" stroke-width="2" fill="none"><path d="M8 112 L14 160"/><path d="M34 120 L36 164"/><path d="M54 140 L52 166"/><path d="M116 114 L110 162"/><path d="M88 124 L86 164"/><path d="M70 140 L72 166"/><path d="M20 112 L22 130"/><path d="M104 110 L106 130"/></g>
<!-- front chairs -->
<path d="M6 113 Q6 109 10 110 L34 116 Q37 117 37 121 L36 128 L8 128Z" fill="#1c4a9c"/>
<path d="M12 134 Q34 126 56 132 Q58 138 52 141 Q30 146 14 142Z" fill="#1f52a6"/>
<path d="M86 118 Q86 114 90 113 L115 110.5 Q119 110.5 118.5 114 L116 132 L88 133Z" fill="#1c4a9c"/>
<path d="M69 135 Q92 130 111 135 Q112 141 106 143 Q88 147 72 143Z" fill="#1f52a6"/>
<path d="M0 140 Q14 136 24 146 L27 166 H0Z" fill="#6a2a18"/>
</svg>
<svg class="abs" style="left:151.1px;top:188.1px" width="125.5" height="166.4" viewBox="0 0 125.5 166">
<rect width="125.5" height="166" fill="#e7e6e2"/>
<rect x="96.2" width="29.3" height="166" fill="#efeeea"/><rect x="95.4" width="1" height="130" fill="#d8d6d0"/>
<path d="M0 90 H96 V96 Q50 100 0 96Z" fill="#dcdad5"/>
<rect y="147" width="125.5" height="19" fill="#b5ada5"/><path d="M0 147 L40 166 H0Z" fill="#9a9088" opacity=".6"/><path d="M30 147 H60 L90 166 H70Z" fill="#d8d2c8" opacity=".7"/>
<rect x="0" y="34.3" width="5.3" height="55.6" fill="#2a2a2a"/><rect x="0" y="36" width="3.8" height="52" fill="#f2f2f0"/>
<rect x="10.8" y="36.3" width="43.1" height="53.1" fill="#cbab8c"/><rect x="12.6" y="38.1" width="39.5" height="49.5" fill="#f3f1ec"/><rect x="14" y="39.5" width="36.7" height="46.7" fill="#6f6152"/>
<path d="M26 86 V58 Q32.3 44 38.6 58 V86Z" fill="#e9e0cf"/><path d="M14 86.2 L26 70 H38.6 L50.7 86.2Z" fill="#a89a88" opacity=".7"/><path d="M29 86 V60 Q32.3 52 35.6 60 V86Z" fill="#fbf6ea"/>
<path d="M71.8 0 V28" stroke="#3a2a2a" stroke-width=".8"/>
<path d="M70.6 27 H73 L74 36 Q88 40 90.4 50.5 Q72 53.5 53 50.5 Q56 40 69.6 36Z" fill="#b8403a"/>
<path d="M62.2 51.5 H80.4 V60 H62.2Z" fill="#e98a3a"/><rect x="62.2" y="51.5" width="18.2" height="2.5" fill="#d9742a"/>
<path d="M55.6 60 H87 L84 62.6 H58.6Z" fill="#f2cdb0"/>
<!-- chairs left -->
<path d="M0.8 108 Q4 101 14 103 Q22 105 26 112 L42 118 V127 H0.8Z" fill="#a86044"/>
<path d="M0.8 112 Q14 110 22 120 V139 H0.8Z" fill="#e9b3a3"/>
<path d="M19 127 H49 V139 H19Z" fill="#b8714f"/>
<g stroke="#8a7a6a" stroke-width="1.2"><path d="M20 139 V160"/><path d="M48 139 V162"/><path d="M2 139 V158"/></g>
<!-- chairs right -->
<path d="M97 112 Q104 106 118 104 Q123 102 125.5 101 V128 H97Z" fill="#b06c50"/>
<path d="M93 128 H125.5 V140 H93Z" fill="#a86850"/>
<path d="M102 140 Q104 128 116 127 H125.5 V160 H102Z" fill="#e8a898"/>
<g stroke="#8a7a6a" stroke-width="1.2"><path d="M94 140 V156"/><path d="M103 156 V166"/></g>
<!-- table -->
<path d="M62.2 118 H78.8 Q77 140 80 166 H61 Q64 140 62.2 118Z" fill="#e9e5da"/>
<path d="M70 118 H78.8 Q77 140 80 166 H74 Q72 140 70 118Z" fill="#d9d4c6" opacity=".8"/>
<ellipse cx="70.5" cy="114" rx="42.3" ry="8.5" fill="#ece8de"/><path d="M28.2 114 Q30 124 70.5 124.5 Q111 124 112.8 114 Q110 120 70.5 121 Q31 120 28.2 114Z" fill="#cfc9ba"/>
<path d="M46.4 107 L66 104.8 L73.8 108 L73.8 112 L55 114.6 L46.4 111Z" fill="#34342f"/><path d="M47.5 106 L66 103.6 L72.5 106.4 L54.5 109.4Z" fill="#e9e7e0"/>
<path d="M80 100 Q81.5 106 88 108 Q90 109.5 88 111 Q81 113.5 74 111 Q72 109.5 74 108 Q79 106 80 100Z" fill="#f2efe8"/>
</svg>
<!--/C4-->
</div>

<!-- SWATCHES -->
<div class="abs sw" style="top:120px;background:#f4c73b;color:#000"><span style="left:32px">Aa</span><span style="left:155px">Überschrift</span></div>
<div class="abs sw" style="top:240.3px;background:#9f7d0a;color:#fff"><span style="left:32px">Aa</span><span style="left:156px">Hintergrund</span></div>
<div class="abs sw" style="top:360.5px;background:#e6e6e6;color:#000"><span style="left:32px">Aa</span><span style="left:158px">Buttons</span></div>

<!-- KI CARD -->
<div id="ki" class="abs"></div>
<!--KIICON--><svg class="abs" style="left:1655px;top:695px" width="60" height="60" viewBox="1655 695 60 60" fill="#4a47ee"><path d="M1676.4 715.1999999999999 Q1679.34 726.96 1691.1000000000001 729.9 Q1679.34 732.84 1676.4 744.6 Q1673.46 732.84 1661.7 729.9 Q1673.46 726.96 1676.4 715.1999999999999Z"/><path d="M1693.4 702.0999999999999 Q1694.88 708.82 1701.6000000000001 710.3 Q1694.88 711.78 1693.4 718.5 Q1691.92 711.78 1685.2 710.3 Q1691.92 708.82 1693.4 702.0999999999999Z"/></svg><!--/KIICON-->
<div id="kit" class="abs">KI-Eingabe</div>
<div id="kib" class="abs">Willkommen zu Ihrer wöchentlichen Portion<br>Tischlampen-Inspiration! Von Designtrends bis hin zu<br>Expertentipps – wir haben genau das Licht, das Sie<br>gesucht haben.</div>

</body>
</html>
